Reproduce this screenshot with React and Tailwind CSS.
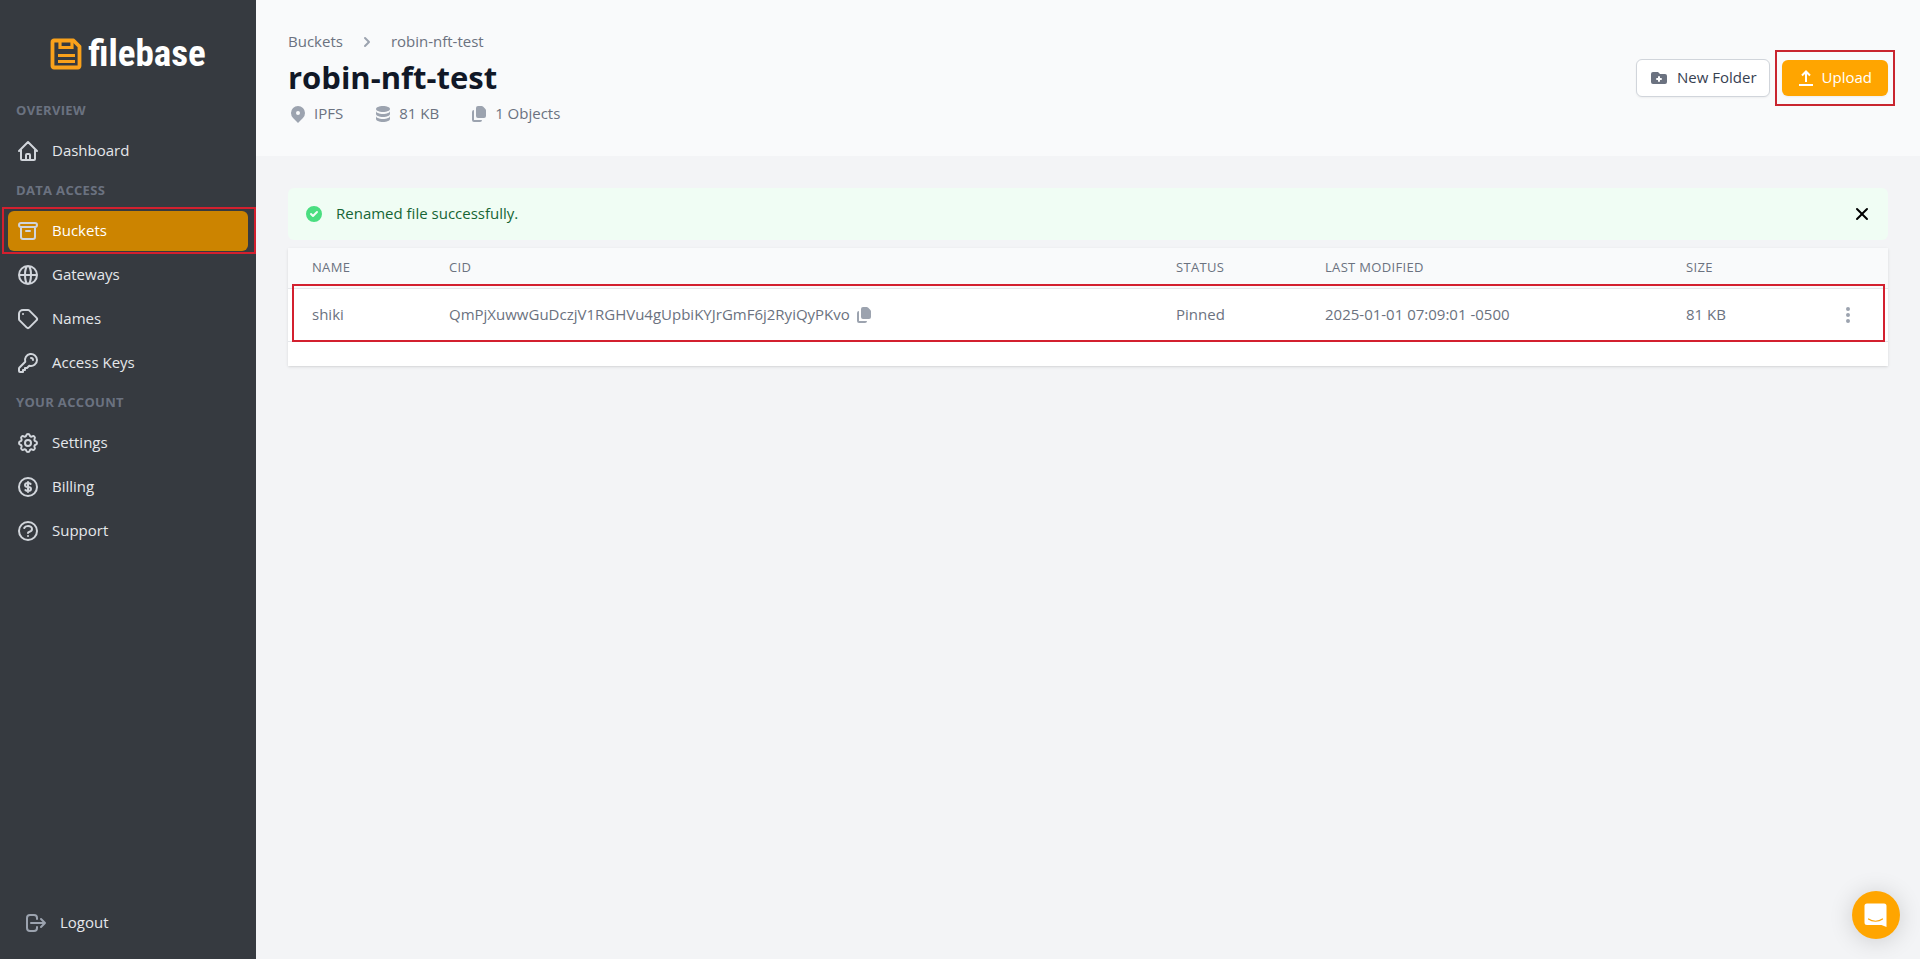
import {
  HiCheckCircle,
  HiChevronRight,
  HiDatabase,
  HiDocumentDuplicate,
  HiDotsVertical,
  HiFolderAdd,
  HiLocationMarker,
  HiOutlineArchive,
  HiOutlineCog,
  HiOutlineCurrencyDollar,
  HiOutlineGlobeAlt,
  HiOutlineHome,
  HiOutlineKey,
  HiOutlineLogout,
  HiOutlineQuestionMarkCircle,
  HiOutlineTag,
  HiX,
} from "react-icons/hi";

function UploadIcon({ className }) {
  return (
    <svg viewBox="0 0 16 16" fill="none" stroke="currentColor" strokeWidth="2" className={className}>
      <path d="M1 15h14M8 12V2M4 5.5 8 1.5l4 4" />
    </svg>
  );
}

const sections = [
  {
    title: "Overview",
    items: [{ label: "Dashboard", Icon: HiOutlineHome }],
  },
  {
    title: "Data Access",
    items: [
      { label: "Buckets", Icon: HiOutlineArchive, active: true },
      { label: "Gateways", Icon: HiOutlineGlobeAlt },
      { label: "Names", Icon: HiOutlineTag },
      { label: "Access Keys", Icon: HiOutlineKey },
    ],
  },
  {
    title: "Your Account",
    items: [
      { label: "Settings", Icon: HiOutlineCog },
      { label: "Billing", Icon: HiOutlineCurrencyDollar },
      { label: "Support", Icon: HiOutlineQuestionMarkCircle },
    ],
  },
];

const stats = [
  { label: "IPFS", Icon: HiLocationMarker },
  { label: "81 KB", Icon: HiDatabase },
  { label: "1 Objects", Icon: HiDocumentDuplicate },
];

const files = [
  {
    name: "shiki",
    cid: "QmPjXuwwGuDczjV1RGHVu4gUpbiKYJrGmF6j2RyiQyPKvo",
    status: "Pinned",
    modified: "2025-01-01 07:09:01 -0500",
    size: "81 KB",
  },
];

function Logo() {
  return (
    <a href="#" className="flex items-center gap-1.5 text-white">
      <svg viewBox="0 0 32 32" fill="none" stroke="#f9a11b" className="size-8">
        <path
          d="M4 2.5h19.5l6 6V28a1.5 1.5 0 0 1-1.5 1.5H4A1.5 1.5 0 0 1 2.5 28V4A1.5 1.5 0 0 1 4 2.5z"
          strokeWidth="3.8"
          strokeLinejoin="round"
        />
        <path d="M10 3v6.5h12V3" strokeWidth="3.2" />
        <path d="M8 17.5h17M8 23.5h17" strokeWidth="3.2" />
      </svg>
      <span className="font-['Liberation_Sans_Narrow','Roboto_Condensed',Roboto,sans-serif] text-[37px] leading-10 font-bold">
        filebase
      </span>
    </a>
  );
}

function NavItem({ label, Icon, active }) {
  return (
    <li className="relative">
      <a
        href="#"
        className={
          active
            ? "flex h-10 items-center gap-3 rounded-md bg-[#cc8400] px-2 text-white"
            : "flex h-10 items-center gap-3 rounded-md px-2 text-[#e5e7eb]"
        }
      >
        <Icon className="size-6 text-[#d1d5db]" />
        <span className="pb-0.5">{label}</span>
      </a>
      {active && (
        <span className="pointer-events-none absolute -top-1 -right-2 -bottom-[3px] -left-1.5 border-2 border-[#d3202f]" />
      )}
    </li>
  );
}

function Sidebar() {
  return (
    <aside className="flex w-64 shrink-0 flex-col bg-[#363a40]">
      <div className="flex h-[91px] items-center justify-center pt-4">
        <Logo />
      </div>

      <nav className="flex-1 px-2 text-[15px]">
        {sections.map((section) => (
          <div key={section.title}>
            <h3 className="flex h-10 items-center px-2 text-[13px] font-bold tracking-wide text-[#6b7280] uppercase">
              {section.title}
            </h3>
            <ul className="space-y-1">
              {section.items.map((item) => (
                <NavItem key={item.label} {...item} />
              ))}
            </ul>
          </div>
        ))}
      </nav>

      <a href="#" className="flex h-[73px] items-center gap-3 px-6 text-[15px] text-[#e5e7eb]">
        <HiOutlineLogout className="size-6 text-[#9ca3af]" />
        Logout
      </a>
    </aside>
  );
}

function Header() {
  return (
    <header className="flex items-start justify-between bg-[#f9fafb] p-8">
      <div>
        <nav className="flex h-5 items-center gap-3.5 text-[15px] text-[#6b7280]">
          <a href="#" className="pb-0.5">Buckets</a>
          <HiChevronRight className="size-5 text-[#9ca3af]" />
          <a href="#" className="pb-0.5">robin-nft-test</a>
        </nav>
        <h1 className="mt-2 text-[31px] leading-[34px] font-bold text-[#111827]">robin-nft-test</h1>
        <ul className="mt-2.5 flex h-5 items-center gap-[30px] text-[15px] text-[#6b7280]">
          {stats.map(({ label, Icon }) => (
            <li key={label} className="flex items-center gap-1.5">
              <Icon className="size-5 text-[#9ca3af]" />
              <span className="pb-0.5">{label}</span>
            </li>
          ))}
        </ul>
      </div>

      <div className="mt-[27px] flex items-center gap-3 text-[15px]">
        <button
          type="button"
          className="flex h-[38px] items-center gap-2 rounded-md border border-[#d1d5db] bg-white px-3 text-[#374151] shadow-xs"
        >
          <HiFolderAdd className="size-5 text-[#6b7280]" />
          <span className="pb-0.5">New Folder</span>
        </button>
        <div className="relative">
          <button
            type="button"
            className="flex h-9 items-center gap-2 rounded-md bg-[#ffa500] px-4 text-white shadow-xs"
          >
            <UploadIcon className="size-4" />
            <span className="pb-0.5">Upload</span>
          </button>
          <span className="pointer-events-none absolute -inset-x-[7px] -inset-y-[10px] border-2 border-[#c9252f]" />
        </div>
      </div>
    </header>
  );
}

function Alert() {
  return (
    <div role="status" className="flex h-[52px] items-center gap-3 rounded-md bg-[#f0fdf4] px-4 text-[15px] text-[#166534]">
      <HiCheckCircle className="size-5 text-[#4ade80]" />
      <p className="flex-1 pb-0.5">Renamed file successfully.</p>
      <button type="button" aria-label="Dismiss" className="text-black">
        <HiX className="size-5" />
      </button>
    </div>
  );
}

function FileTable() {
  return (
    <div className="relative mt-2 bg-white pb-6 shadow-sm">
      <table className="w-full table-fixed text-left text-[15px] text-[#6b7280]">
        <colgroup>
          <col className="w-[137px]" />
          <col />
          <col className="w-[149px]" />
          <col className="w-[361px]" />
          <col className="w-[137px]" />
          <col className="w-[89px]" />
        </colgroup>
        <thead>
          <tr className="h-10 border-b border-[#e5e7eb] bg-[#f9fafb] text-[13px] tracking-wide uppercase">
            <th className="px-6 font-normal">Name</th>
            <th className="px-6 font-normal">CID</th>
            <th className="px-6 font-normal">Status</th>
            <th className="px-6 font-normal">Last Modified</th>
            <th className="px-6 font-normal">Size</th>
            <th className="px-6" />
          </tr>
        </thead>
        <tbody>
          {files.map((file) => (
            <tr key={file.cid} className="h-[53px] border-b border-[#e5e7eb]">
              <td className="px-6">{file.name}</td>
              <td className="px-6">
                <div className="flex items-center gap-1">
                  {file.cid}
                  <button type="button" aria-label="Copy CID">
                    <HiDocumentDuplicate className="size-5 text-[#9ca3af]" />
                  </button>
                </div>
              </td>
              <td className="px-6">{file.status}</td>
              <td className="px-6">{file.modified}</td>
              <td className="px-6">{file.size}</td>
              <td className="px-6">
                <button type="button" aria-label="File actions" className="ml-auto block px-1.5">
                  <HiDotsVertical className="size-5 text-[#9ca3af]" />
                </button>
              </td>
            </tr>
          ))}
        </tbody>
      </table>
      <div className="pointer-events-none absolute top-9 right-[3px] bottom-6 left-1 border-2 border-[#d3202f]" />
    </div>
  );
}

export default function App() {
  return (
    <div className="flex min-h-screen bg-[#f3f4f6] font-['Open_Sans','Noto_Sans',sans-serif]">
      <Sidebar />

      <div className="min-w-0 flex-1">
        <Header />
        <main className="p-8">
          <Alert />
          <FileTable />
        </main>
      </div>

      {/* chat launcher */}
      <button
        type="button"
        aria-label="Open chat"
        className="fixed right-5 bottom-5 flex size-12 items-center justify-center rounded-full bg-[#ffa500] shadow-[0_2px_24px_rgba(0,0,0,0.16)]"
      >
        <svg viewBox="0 0 24 24" className="size-6">
          <path d="M3 .5h17A2.5 2.5 0 0 1 22.5 3v21l-5-2H3A2.5 2.5 0 0 1 .5 19.5V3A2.5 2.5 0 0 1 3 .5z" fill="#fff" />
          <path d="M4.5 16c4 3 10 3 14 0" fill="none" stroke="#ffa500" strokeWidth="1.2" strokeLinecap="round" />
        </svg>
      </button>
    </div>
  );
}
